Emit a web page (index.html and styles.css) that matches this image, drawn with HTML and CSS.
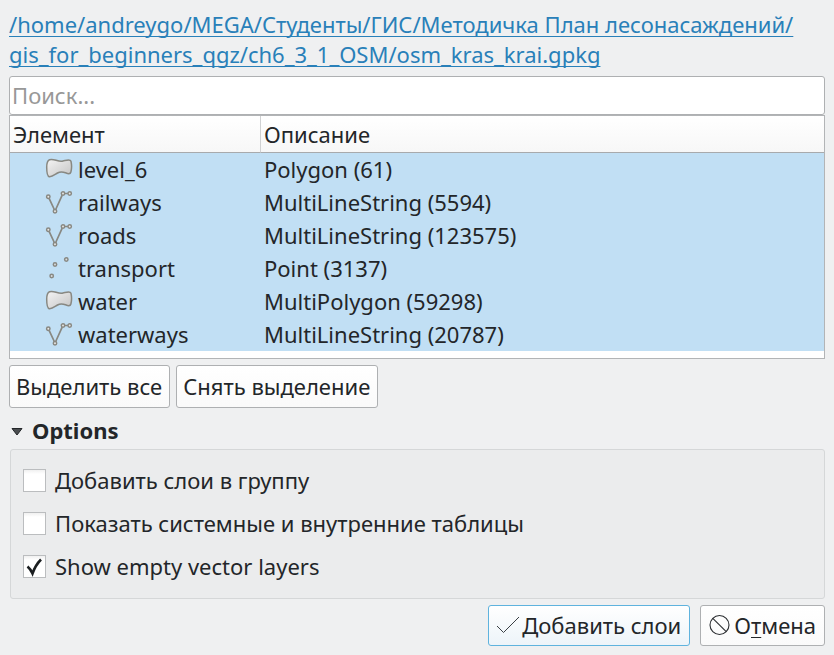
FILE: index.html
```html
<!DOCTYPE html>
<html lang="ru">
<head>
<meta charset="utf-8">
<title>Добавить слои</title>
<link rel="stylesheet" href="styles.css">
</head>
<body>
<svg class="defs" aria-hidden="true">
  <defs>
    <linearGradient id="shade" x1="0" y1="0" x2="1" y2="1">
      <stop offset="0" stop-color="#f4f4f4"/>
      <stop offset="1" stop-color="#c4c4c4"/>
    </linearGradient>
    <symbol id="polygon" viewBox="0 0 28 28">
      <path d="M4.500 4.700C9 3.200 13 7.200 18 6C21 5.400 25.200 3.600 26 6.300C26.700 9.500 26.700 14 25.900 17C25.200 19.500 23 18.800 20.500 17.800C17.500 16.600 15.500 16.200 12.500 18C9.500 19.800 7 22 4.300 21.700C1.700 21 1.700 15.500 1.700 12.200C1.700 9 2.200 5.600 4.500 4.700Z" fill="url(#shade)" stroke="#888882" stroke-width="1.500"/>
    </symbol>
    <symbol id="line" viewBox="0 0 28 28">
      <g fill="#e8e8e6" stroke="#888882" stroke-width="1.500">
        <path d="M4.100 10.300L9.300 21.500M10.700 21.500L17.200 7.200M19.800 5.500H22.900" fill="none" stroke-width="1.700"/>
        <circle cx="3.300" cy="8.800" r="1.700"/>
        <circle cx="10" cy="23.200" r="1.700"/>
        <circle cx="18" cy="5.500" r="1.700"/>
        <circle cx="24.700" cy="5.500" r="1.700"/>
      </g>
    </symbol>
    <symbol id="point" viewBox="0 0 28 28">
      <g fill="#d8dcdd" stroke="#888882" stroke-width="1.500">
        <circle cx="6.700" cy="22" r="1.700"/>
        <circle cx="10" cy="10.500" r="1.700"/>
        <circle cx="21.300" cy="5.500" r="1.700"/>
      </g>
    </symbol>
  </defs>
</svg>
<main class="dialog">
  <a class="path" href="#">/home/andreygo/MEGA/Студенты/ГИС/Методичка План лесонасаждений/<wbr>gis_for_beginners_qgz/ch6_3_1_OSM/osm_kras_krai.gpkg</a>
  <input class="search" type="text" placeholder="Поиск..." aria-label="Поиск">
  <div class="list">
    <table class="layers">
      <thead><tr><th class="name-col" scope="col">Элемент</th><th scope="col">Описание</th></tr></thead>
      <tbody>
        <tr><td><span class="item"><svg class="icon"><use href="#polygon"/></svg>level_6</span></td><td>Polygon (61)</td></tr>
        <tr><td><span class="item"><svg class="icon"><use href="#line"/></svg>railways</span></td><td>MultiLineString (5594)</td></tr>
        <tr><td><span class="item"><svg class="icon"><use href="#line"/></svg>roads</span></td><td>MultiLineString (123575)</td></tr>
        <tr><td><span class="item"><svg class="icon"><use href="#point"/></svg>transport</span></td><td>Point (3137)</td></tr>
        <tr><td><span class="item"><svg class="icon"><use href="#polygon"/></svg>water</span></td><td>MultiPolygon (59298)</td></tr>
        <tr><td><span class="item"><svg class="icon"><use href="#line"/></svg>waterways</span></td><td>MultiLineString (20787)</td></tr>
      </tbody>
    </table>
  </div>
  <div class="selection">
    <button class="btn" type="button">Выделить все</button>
    <button class="btn" type="button">Снять выделение</button>
  </div>
  <h2 class="title"><svg class="arrow" viewBox="0 0 12 12"><path d="M1 4.500H11L6 11Z" fill="#4a4d50" stroke="#232629"/></svg>Options</h2>
  <div class="options">
    <label class="option"><input class="check" type="checkbox">Добавить слои в группу</label>
    <label class="option"><input class="check" type="checkbox">Показать системные и внутренние таблицы</label>
    <label class="option"><span class="box"><input class="check" type="checkbox" checked><svg class="tick" viewBox="0 0 23 23"><path d="M4.500 11.500Q7.500 14 9.500 18.500Q12.500 10 18 4.500" fill="none" stroke="#1b1e20" stroke-width="2.600"/></svg></span>Show empty vector layers</label>
  </div>
  <div class="actions">
    <button class="btn action primary" type="button"><svg class="action-icon" viewBox="0 0 24 24"><path d="M1 13L7.500 19.500L23 4" fill="none" stroke="#3b4045"/></svg>Добавить слои</button>
    <button class="btn action" type="button"><svg class="action-icon" viewBox="0 0 24 24"><g fill="none" stroke="#2b2e31" stroke-width="1.100"><circle cx="11.500" cy="12" r="9.500"/><path d="M4.800 5.300L18.200 18.700"/></g></svg><span>О<u>т</u>мена</span></button>
  </div>
</main>
</body>
</html>
```
FILE: styles.css
```css
* {
  box-sizing: border-box;
}

body {
  margin: 0;
  background: #eff0f1;
  color: #232629;
  font: 22px/30px "Noto Sans", sans-serif;
}

.defs {
  position: absolute;
  width: 0;
  height: 0;
}

.dialog {
  display: flex;
  flex-direction: column;
  padding: 9px 9px 8px;
}

.path {
  color: #2980b9;
  margin-bottom: 7px;
  text-decoration-thickness: 1px;
  text-underline-offset: 3px;
  text-decoration-skip-ink: none;
}

.search {
  width: 100%;
  height: 39px;
  padding: 0 2px 2px;
  border: 1px solid #aeb0b2;
  border-radius: 3px;
  background: #fff;
  color: inherit;
  font: inherit;
}

.search::placeholder {
  color: #989898;
  opacity: 1;
}

.list {
  border: 1px solid #b2b4b6;
  background: #fff;
  padding-bottom: 7px;
}

.layers {
  width: 100%;
  border-collapse: separate;
  border-spacing: 0;
  table-layout: fixed;
}

.layers th {
  height: 37px;
  padding: 0 3px;
  border-bottom: 1px solid #a8aaac;
  background: linear-gradient(#fff, #f7f7f7);
  font-weight: 400;
  text-align: left;
}

.layers .name-col {
  width: 251px;
  border-right: 1px solid #d0d1d2;
}

.layers td {
  height: 33px;
  padding: 0 3px 2px;
  background: #c1dff4;
}

.item {
  display: flex;
  align-items: center;
  gap: 5px;
  padding-left: 32px;
}

.icon {
  width: 28px;
  height: 28px;
}

.selection {
  display: flex;
  gap: 6px;
  margin-top: 6px;
}

.btn {
  display: flex;
  align-items: center;
  height: 43px;
  padding: 0 7px 2px 6px;
  border: 1px solid #aeb0b2;
  border-radius: 3px;
  background: linear-gradient(#fff, #fafafa);
  color: inherit;
  font: inherit;
  white-space: nowrap;
}

.title {
  display: flex;
  align-items: center;
  gap: 9px;
  margin: 7px 0 4px;
  padding-left: 2px;
  font-size: 22px;
  line-height: 30px;
}

.arrow {
  width: 12px;
  height: 12px;
}

.options {
  display: flex;
  flex-direction: column;
  gap: 13px;
  margin-left: 1px;
  padding: 15px 12px 17px;
  border: 1px solid #d5d7d8;
  border-radius: 3px;
  background: #ebeced;
}

.option {
  display: flex;
  align-items: center;
  gap: 9px;
}

.box {
  position: relative;
  display: flex;
}

.check {
  width: 23px;
  height: 23px;
  margin: 0;
  appearance: none;
  border: 1px solid #bbbdbf;
  background: linear-gradient(#f0f0f0, #fff 4px);
}

.tick {
  position: absolute;
  inset: 0;
}

.actions {
  display: flex;
  justify-content: flex-end;
  gap: 10px;
  margin-top: 6px;
}

.action {
  height: 41px;
  gap: 2px;
  padding: 0 8px 2px 7px;
}

.primary {
  border-color: #5fb3de;
  background: linear-gradient(#fff, #edf4f9);
}

.action-icon {
  width: 24px;
  height: 24px;
}

.action u {
  text-decoration-thickness: 1px;
  text-underline-offset: 3px;
}
```
